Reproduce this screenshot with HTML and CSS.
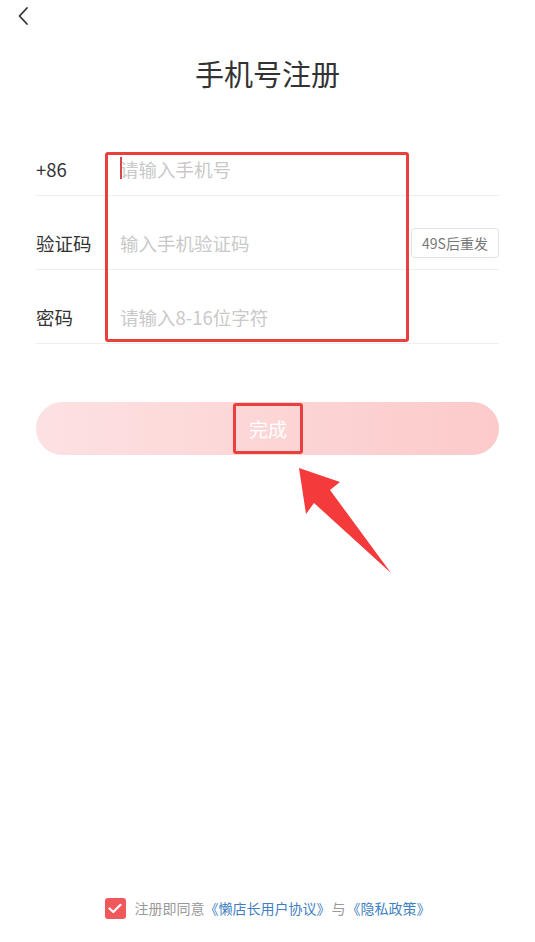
FILE: index.html
```html
<!DOCTYPE html>
<html lang="zh-CN">
<head>
  <meta charset="UTF-8">
  <meta name="viewport" content="width=device-width, initial-scale=1.0">
  <title>手机号注册</title>
  <link rel="stylesheet" href="styles.css">
</head>
<body>

  <div class="page">
    <!-- Top bar -->
    <div class="top-bar">
      <svg class="back" width="12" height="20" viewBox="0 0 12 20">
        <path d="M10 2 L2.5 10 L10 18" fill="none" stroke="#333" stroke-width="1.8" stroke-linecap="round" stroke-linejoin="round"/>
      </svg>
    </div>

    <h1 class="title">手机号注册</h1>

    <!-- Register form -->
    <div class="form">
      <div class="row">
        <span class="label">+86</span>
        <div class="field">
          <span class="caret"></span>
          <input type="tel" placeholder="请输入手机号">
        </div>
      </div>
      <div class="row">
        <span class="label">验证码</span>
        <div class="field">
          <input type="text" placeholder="输入手机验证码">
        </div>
        <button class="resend">49S后重发</button>
      </div>
      <div class="row">
        <span class="label">密码</span>
        <div class="field">
          <input type="password" placeholder="请输入8-16位字符">
        </div>
      </div>

      <!-- annotation box -->
      <div class="mark mark-fields"></div>
    </div>

    <button class="submit"><span class="mark-text">完成</span></button>

    <!-- annotation arrow -->
    <svg class="arrow" width="100" height="110" viewBox="0 0 100 110">
      <polygon points="4,2 45,16 35,24 96,107 19,37 11,48" fill="#f43a3a"/>
    </svg>

    <!-- Agreement -->
    <div class="agree">
      <span class="check">
        <svg width="14" height="11" viewBox="0 0 14 11">
          <path d="M1.5 5.5 L5.3 9 L12.5 1.8" fill="none" stroke="#fff" stroke-width="2.2" stroke-linecap="round" stroke-linejoin="round"/>
        </svg>
      </span>
      <span class="agree-text">注册即同意</span>
      <a href="#">《懒店长用户协议》</a>
      <span class="agree-text and">与</span>
      <a href="#">《隐私政策》</a>
    </div>
  </div>

</body>
</html>
```

FILE: styles.css
```css
body {
  margin: 0;
  padding: 0;
  font-family: "Noto Sans CJK SC", "Noto Sans", sans-serif;
  background: #fff;
  color: #333;
}

.page {
  position: relative;
  display: flex;
  flex-direction: column;
  min-height: 100vh;
}

.top-bar {
  height: 32px;
  padding-left: 17px;
  display: flex;
  align-items: center;
}

.title {
  margin: 21px 0 0;
  font-size: 29px;
  font-weight: normal;
  line-height: 40px;
  text-align: center;
  color: #333;
}

.form {
  position: relative;
  margin: 29px 36px 0;
}

.row {
  display: flex;
  align-items: center;
  height: 74px;
  box-sizing: border-box;
  padding-top: 21px;
  border-bottom: 1px solid #efefef;
}

.label {
  width: 84px;
  font-size: 18.5px;
  color: #333;
}

.field {
  position: relative;
  flex: 1;
  display: flex;
  align-items: center;
}

.field input {
  width: 100%;
  border: none;
  outline: none;
  padding: 0;
  font-family: inherit;
  font-size: 18.5px;
  color: #333;
  background: transparent;
}

.field input::placeholder {
  color: #c9c9c9;
}

.caret {
  position: absolute;
  left: 0;
  top: 50%;
  width: 2px;
  height: 22px;
  margin-top: -12px;
  background: #d9474b;
}

.resend {
  width: 88px;
  height: 30px;
  padding: 0;
  border: 1px solid #e2e2e2;
  border-radius: 4px;
  background: #fff;
  font-family: inherit;
  font-size: 14px;
  color: #777;
}

.mark {
  position: absolute;
  box-sizing: border-box;
  border: 3px solid #ea3f3f;
  border-radius: 3px;
}

.mark-fields {
  left: 69px;
  top: 30px;
  width: 304px;
  height: 190px;
}

.submit {
  margin: 58px 36px 0;
  height: 53px;
  border: none;
  border-radius: 27px;
  background: linear-gradient(90deg, #fde1e2, #fccaca);
  display: flex;
  justify-content: center;
  align-items: center;
  padding: 0;
}

.mark-text {
  box-sizing: border-box;
  width: 70px;
  height: 51px;
  border: 3px solid #ea3f3f;
  border-radius: 3px;
  display: flex;
  justify-content: center;
  align-items: center;
  font-family: inherit;
  font-size: 19px;
  color: #fff;
}

.arrow {
  position: absolute;
  left: 295px;
  top: 466px;
}

.agree {
  margin-top: auto;
  padding-bottom: 23px;
  display: flex;
  justify-content: center;
  align-items: center;
  font-size: 14px;
  line-height: 22px;
}

.check {
  width: 21px;
  height: 21px;
  border-radius: 3px;
  background: #f0595b;
  display: flex;
  justify-content: center;
  align-items: center;
  margin-right: 9px;
}

.agree-text {
  color: #999;
}

.agree-text.and {
  margin: 0 1px;
}

.agree a {
  color: #3f80c2;
  text-decoration: none;
}
```
